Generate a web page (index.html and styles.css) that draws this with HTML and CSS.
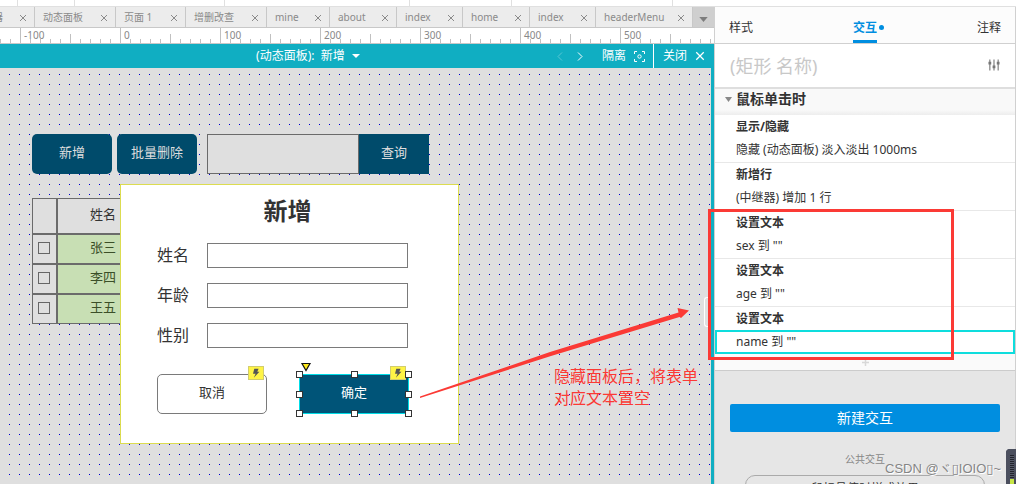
FILE: index.html
```html
<!DOCTYPE html>
<html lang="zh-CN">
<head>
<meta charset="utf-8">
<title>新增 - 交互</title>
<link rel="stylesheet" href="styles.css">
</head>
<body>
<svg class="defs" aria-hidden="true">
  <symbol id="x" viewBox="0 0 8 8"><path d="M1 1l6 6M7 1l-6 6" fill="none" stroke="currentColor" stroke-width="1"/></symbol>
  <symbol id="bolt" viewBox="0 0 16 14"><path d="M6 2h5L9.500 5.500H12L5.500 12.500 7.500 8H4.500z" fill="#555"/></symbol>
</svg>
<div class="toolbar"><i class="c1"></i><i class="c2"></i><i class="c3"></i><i class="c4"></i><i class="c5"></i><i class="c6"></i></div>
<div class="app">
  <main class="editor">
    <nav class="tabs">
      <div class="tab w34 cut"><span>器</span><button aria-label="关闭"><svg><use href="#x"/></svg></button></div>
      <div class="tab w81"><span>动态面板</span><button aria-label="关闭"><svg><use href="#x"/></svg></button></div>
      <div class="tab w70"><span>页面 1</span><button aria-label="关闭"><svg><use href="#x"/></svg></button></div>
      <div class="tab w81"><span>增删改查</span><button aria-label="关闭"><svg><use href="#x"/></svg></button></div>
      <div class="tab w63"><span>mine</span><button aria-label="关闭"><svg><use href="#x"/></svg></button></div>
      <div class="tab w67"><span>about</span><button aria-label="关闭"><svg><use href="#x"/></svg></button></div>
      <div class="tab w66"><span>index</span><button aria-label="关闭"><svg><use href="#x"/></svg></button></div>
      <div class="tab w67"><span>home</span><button aria-label="关闭"><svg><use href="#x"/></svg></button></div>
      <div class="tab w66"><span>index</span><button aria-label="关闭"><svg><use href="#x"/></svg></button></div>
      <div class="tab w97"><span>headerMenu</span><button aria-label="关闭"><svg><use href="#x"/></svg></button></div>
      <button class="more" aria-label="更多"><svg viewBox="0 0 10 6"><path d="M0 0h10L5 6z" fill="#7c7c7c"/></svg></button>
    </nav>
    <div class="ruler"><span>-100</span><span>0</span><span>100</span><span>200</span><span>300</span><span>400</span><span>500</span></div>
    <div class="statebar">
      <button class="state">(动态面板):&nbsp; 新增 <svg viewBox="0 0 8 4"><path d="M0 0h8L4 4z" fill="#fff"/></svg></button>
      <div class="tools">
        <button class="step dim" aria-label="上一个"><svg viewBox="0 0 6 9"><path d="M5 .5l-4 4 4 4"/></svg></button>
        <button class="step" aria-label="下一个"><svg viewBox="0 0 6 9"><path d="M1 .5l4 4-4 4"/></svg></button>
        <button class="isolate">隔离 <svg viewBox="0 0 11 11"><path d="M.5 3V.5H3M8 .5h2.500V3M10.500 8v2.500H8M3 10.500H.5V8"/><circle cx="5.500" cy="5.500" r="1.700"/></svg></button>
        <button class="close">关闭 <svg><use href="#x"/></svg></button>
      </div>
    </div>
    <section class="canvas">
      <button class="item fill b-add">新增</button>
      <button class="item fill b-del">批量删除</button>
      <form class="item search"><input aria-label="查询内容"><button class="fill" type="button">查询</button></form>
      <table class="item people">
        <thead><tr><th></th><th>姓名</th></tr></thead>
        <tbody>
          <tr><td><input type="checkbox" aria-label="张三"></td><td>张三</td></tr>
          <tr><td><input type="checkbox" aria-label="李四"></td><td>李四</td></tr>
          <tr><td><input type="checkbox" aria-label="王五"></td><td>王五</td></tr>
        </tbody>
      </table>
      <form class="item dialog">
        <h1>新增</h1>
        <div class="fields">
          <label for="name">姓名</label><input id="name">
          <label for="age">年龄</label><input id="age">
          <label for="sex">性别</label><input id="sex">
        </div>
        <div class="actions">
          <div class="wrap"><button class="cancel" type="button">取消</button><svg class="badge"><use href="#bolt"/></svg></div>
          <div class="wrap"><button class="ok" type="button">确定</button><svg class="badge"><use href="#bolt"/></svg>
            <svg class="handles" viewBox="0 0 117 52" aria-hidden="true">
              <path d="M7 1.500h8L11 8.500z" fill="#ffeb1c" stroke="#111" stroke-width="1.200"/>
              <g fill="#fff" stroke="#333">
                <rect x="1.500" y="9.500" width="6" height="6"/><rect x="56.500" y="9.500" width="6" height="6"/><rect x="110.500" y="9.500" width="6" height="6"/>
                <rect x="1.500" y="29.500" width="6" height="6"/><rect x="110.500" y="29.500" width="6" height="6"/>
                <rect x="1.500" y="48.500" width="6" height="6"/><rect x="56.500" y="48.500" width="6" height="6"/><rect x="110.500" y="48.500" width="6" height="6"/>
              </g>
            </svg>
          </div>
        </div>
      </form>
      <svg class="item arrow" viewBox="0 0 270 90" aria-hidden="true"><path d="M0 88.500L130 44 258.500 4.500 257.500 0 269 2.500 261 10 259.500 9 131 48 0 90z" fill="#fb3a35"/></svg>
      <p class="item note">隐藏面板后，将表单<br>对应文本置空</p>
      <div class="item grip"></div>
    </section>
  </main>
  <aside class="panel">
    <nav class="ptabs"><button>样式</button><button class="on">交互</button><button>注释</button></nav>
    <div class="namebar">
      <input aria-label="名称" placeholder="(矩形 名称)">
      <svg viewBox="0 0 13 13"><path d="M2 0v12M6.500 0v12M11 0v12" stroke="#777" stroke-width="1.200"/><path d="M.5 4h3M9.500 4h3M5 8h3" stroke="#777" stroke-width="3"/></svg>
    </div>
    <h2><svg viewBox="0 0 7 5"><path d="M0 0h7L3.500 5z" fill="#888"/></svg>鼠标单击时</h2>
    <ul class="cases">
      <li><b>显示/隐藏</b><span>隐藏 (动态面板) 淡入淡出 1000ms</span></li>
      <li><b>新增行</b><span>(中继器) 增加 1 行</span></li>
      <li><b>设置文本</b><span>sex 到 ""</span></li>
      <li><b>设置文本</b><span>age 到 ""</span></li>
      <li><b>设置文本</b><span class="sel">name 到 ""</span></li>
    </ul>
    <button class="plus" aria-label="添加"><svg viewBox="0 0 7 7"><path d="M3.500 0v7M0 3.500h7" stroke="#d8d8d8" stroke-width="1.500"/></svg></button>
    <div class="foot">
      <button class="new">新建交互</button>
      <h3>公共交互</h3>
      <button class="hover">鼠标悬停时样式效果</button>
    </div>
  </aside>
</div>
<div class="mark"></div>
<div class="watermark">CSDN @ヾ▯IOIO▯~</div>
<div class="meter"></div>
</body>
</html>
```

FILE: styles.css
```css
* { box-sizing: border-box; }
body { margin: 0; height: 100vh; overflow: hidden; position: relative; display: flex; flex-direction: column; background: #fff; color: #333; font: 12px/16px "Noto Sans", "Noto Sans CJK SC", sans-serif; }
button, input { font: inherit; color: inherit; margin: 0; padding: 0; border: 0; background: none; border-radius: 0; }
h1, h2, h3, ul, p { margin: 0; padding: 0; }
.defs { position: absolute; width: 0; height: 0; }

.toolbar { flex: none; height: 7px; display: flex; border-bottom: 1px solid #e0e0e0; }
.toolbar i { border-right: 1px solid #e0e0e0; }
.c1 { width: 18px; }
.c2 { width: 57px; }
.c3 { width: 150px; }
.c4 { width: 185px; }
.c5 { width: 102px; }
.c6 { width: 161px; }

.app { flex: 1; min-height: 0; display: grid; grid-template-columns: minmax(0, 1fr) 302px; }
.editor { display: flex; flex-direction: column; min-width: 0; min-height: 0; }
.tabs { flex: none; height: 21px; display: flex; background: #ececec; border-bottom: 1px solid #c8c8c8; color: #8a8a8a; font-size: 10px; overflow: hidden; }
.tab { flex: none; display: flex; align-items: center; justify-content: space-between; padding: 0 7px 0 8px; border-right: 1px solid #c8c8c8; white-space: nowrap; }
.tab button { display: flex; padding-top: 2px; }
.tab svg { width: 8px; height: 8px; }
.cut { overflow: hidden; justify-content: flex-end; gap: 16px; }
.w34 { width: 35px; }
.w81 { width: 81px; }
.w70 { width: 70px; }
.w63 { width: 63px; }
.w67 { width: 67px; }
.w66 { width: 66px; }
.w97 { width: 97px; }
.more { flex: 1; background: #cfcfcf; display: flex; align-items: center; justify-content: center; padding-top: 4px; }
.more svg { width: 9px; height: 5px; }

.ruler { flex: none; height: 16px; display: flex; padding-left: 24px; overflow: hidden; color: #888; font-size: 10px; line-height: 15px; border-bottom: 1px solid #c8c8c8;
  background:
    linear-gradient(90deg, #c0c0c0 1px, transparent 1px) 20px 0 / 100px 15px repeat-x,
    linear-gradient(90deg, #c0c0c0 1px, transparent 1px) 20px 6px / 50px 9px repeat-x,
    linear-gradient(90deg, #c0c0c0 1px, transparent 1px) 0 11px / 10px 4px repeat-x, #fff; }
.ruler span { flex: none; width: 100px; }

.statebar { flex: none; height: 24px; display: grid; grid-template-columns: 1fr auto 1fr; background: #10aec2; color: #fff; }
.state { grid-column: 2; display: flex; align-items: center; gap: 4px; white-space: pre; margin-right: 98px; }
.state svg { width: 8px; height: 4px; }
.tools { position: absolute; right: 303px; height: 24px; display: flex; align-items: center; }
.tools svg { fill: none; stroke: #fff; }
.step { width: 20px; display: flex; justify-content: center; }
.step svg { width: 6px; height: 9px; }
.dim { opacity: .3; }
.isolate, .close { height: 24px; display: flex; align-items: center; gap: 8px; }
.isolate { padding: 0 8px 0 12px; border-right: 1px solid #fff; }
.isolate svg { width: 11px; height: 11px; }
.close { padding: 0 8px 0 9px; }
.close svg { width: 10px; height: 10px; }

.canvas { flex: 1; min-height: 0; position: relative; overflow: hidden; border-right: 3px solid #10aec2; font-size: 13px;
  background:
    linear-gradient(#dfdfdf 9px, transparent 9px) 0 -3px / 10px 10px,
    linear-gradient(90deg, #0000c8 1px, #dfdfdf 1px) 9px 0 / 10px 10px; }
.item { position: absolute; }
.fill { background: #004b6b; color: #dfdfdf; height: 40px; padding-bottom: 4px; }
.b-add, .b-del { top: 66px; width: 80px; border-radius: 5px; }
.b-add { left: 32px; }
.b-del { left: 117px; }
.search { left: 207px; top: 66px; display: flex; }
.search input { width: 152px; height: 40px; border: 1px solid #6b6b6b; background: #dfdfdf; }
.search button { width: 70px; }
.people { left: 32px; top: 130px; border-spacing: 0; table-layout: fixed; width: 117px; background: #dfdfdf; color: #333; }
.people th, .people td { padding: 0; border: 1px solid #6b6b6b; height: 30px; text-align: center; line-height: 16px; font-weight: 400; }
.people th { height: 36px; }
.people tr > :first-child { width: 25px; }
.people th:last-child, .people td:last-child { padding-bottom: 4px; }
.people td:last-child { background: #c8dfb4; color: #3b4f28; }
.people input { appearance: none; display: block; width: 12px; height: 12px; margin: 0 auto 3px 5px; border: 1px solid #666; }
.dialog { left: 120px; top: 116px; width: 339px; height: 260px; background: #fff; border: 1px solid #dcdc50; }
.dialog h1 { font-size: 24px; line-height: 28px; padding: 12px 4px 0 0; text-align: center; }
.fields { display: grid; grid-template-columns: 50px 201px; gap: 15px 0; padding: 18px 0 0 36px; font-size: 16px; }
.fields label { line-height: 25px; }
.fields input { height: 25px; border: 1px solid #7a7a7a; background: #fff; padding: 0 4px; }
.actions { display: flex; gap: 32px; padding: 26px 0 0 36px; }
.wrap { position: relative; width: 110px; height: 40px; }
.wrap button { width: 100%; height: 100%; padding-bottom: 4px; }
.cancel { border: 1px solid #7a7a7a; border-radius: 5px; }
.ok { background: #005478; color: #fff; border: 1px solid #00dce6; }
.badge { position: absolute; right: 3px; top: -8px; width: 16px; height: 14px; background: #fff446; border: 1px solid #d2cd6e; }
.handles { position: absolute; left: -4px; top: -12px; width: 117px; height: 52px; overflow: visible; }
.arrow { left: 420px; top: 240px; width: 270px; height: 90px; }
.note { left: 554px; top: 297px; color: #fb3a35; font-size: 16px; line-height: 22px; white-space: nowrap; }
.grip { right: 0; top: 229px; width: 7px; height: 30px; border: 1px solid #fff; border-radius: 3px 0 0 3px; border-right: 0; background: #dfdfdf; }

.panel { display: flex; flex-direction: column; min-height: 0; overflow: hidden; background: #e6e6e6; border: solid #d0d0d0; border-width: 0 1px; }
.ptabs { flex: none; height: 37px; display: flex; justify-content: space-between; padding: 0 14px; background: #fcfcfc; border-bottom: 1px solid #d0d0d0; }
.ptabs button { height: 36px; padding-top: 8px; border-bottom: 3px solid transparent; }
.ptabs .on { position: relative; color: #008ee0; font-weight: 700; border-color: #008ee0; }
.ptabs .on::after { content: ""; position: absolute; left: 26px; top: 18px; width: 5px; height: 5px; border-radius: 50%; background: #008ee0; }
.namebar { flex: none; height: 45px; display: flex; align-items: center; justify-content: space-between; padding: 0 15px; background: #fff; border-bottom: 2px solid #dedede; }
.namebar input { flex: 1; min-width: 0; font-size: 18px; }
.namebar input::placeholder { color: #c8c8c8; opacity: 1; }
.namebar svg { width: 12px; height: 13px; }
h2 { flex: none; height: 26px; display: flex; align-items: center; gap: 4px; padding: 0 10px 6px; background: linear-gradient(#f9f9f9 80%, #ededed); font-size: 14px; line-height: 20px; }
h2 svg { width: 7px; height: 5px; }
.cases { flex: none; list-style: none; background: #fff; }
.cases li { height: 48px; display: flex; flex-direction: column; border-bottom: 1px solid #e8e8e8; }
.cases b, .cases span { padding-left: 21px; }
.cases b { line-height: 23px; }
.cases span { line-height: 23px; }
.cases .sel { height: 24px; line-height: 20px; padding-left: 19px; border: 2px solid #0edddd; }
.cases li:last-child { height: auto; border: 0; }
.plus { flex: none; height: 17px; background: #fafafa; border-bottom: 1px solid #ccc; display: flex; align-items: center; justify-content: center; }
.plus svg { width: 7px; height: 7px; }
.foot { padding: 33px 15px 0; display: flex; flex-direction: column; align-items: stretch; }
.new { height: 28px; border-radius: 2px; background: #008ee0; color: #fff; font-size: 14px; }
.foot h3 { padding: 19px 0 8px; text-align: center; font-size: 10px; line-height: 16px; font-weight: 400; color: #888; }
.hover { flex: none; height: 28px; margin: 0 15px; border: 1px solid #aaa; border-radius: 10px; }

.mark { position: absolute; right: 62px; top: 209px; width: 246px; height: 151px; border: 3px solid #fb3a35; pointer-events: none; }
.watermark { position: absolute; right: 15px; bottom: 6px; color: #858585; font: 13px/18px "Liberation Sans", "Noto Sans CJK SC", "DejaVu Sans", sans-serif; text-shadow: 1px 1px #fff; white-space: nowrap; }
.meter { position: absolute; right: 0; bottom: 0; width: 10px; height: 35px; border-radius: 4px 0 0 0; border: solid #4b4f5e; border-width: 6px 2px 0 4px; background: linear-gradient(transparent 24px, #c8e646 24px) 0 0 / 4px 29px no-repeat, repeating-linear-gradient(#22242c 0 1px, #565a69 1px 2px); }
```
